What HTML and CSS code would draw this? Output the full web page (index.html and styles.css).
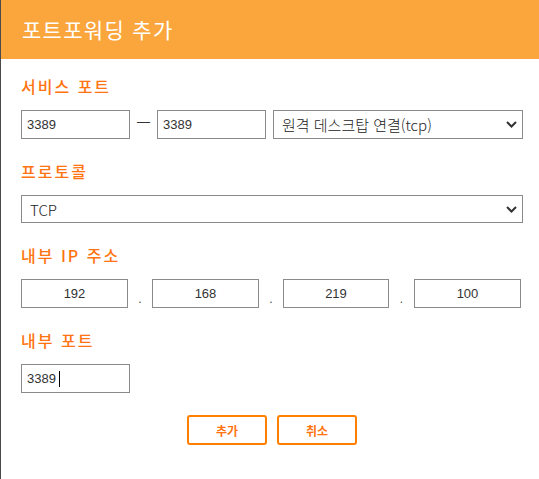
FILE: index.html
```html
<!DOCTYPE html>
<html lang="ko">
<head>
<meta charset="utf-8">
<link rel="stylesheet" href="styles.css">
</head>
<body>
<div class="dialog">
  <div class="header">포트포워딩 추가</div>
  <div class="content">
    <div class="section">
      <div class="label">서비스 포트</div>
      <div class="port-row">
        <input class="text-input port" type="text" value="3389">
        <span class="dash">—</span>
        <input class="text-input port" type="text" value="3389">
        <div class="select-wrap grow">
          <select class="select"><option>원격 데스크탑 연결(tcp)</option></select>
          <svg class="chev" width="11" height="7" viewBox="0 0 11 7"><path d="M1 1 L5.5 5.5 L10 1" fill="none" stroke="#333" stroke-width="2"/></svg>
        </div>
      </div>
    </div>
    <div class="section">
      <div class="label">프로토콜</div>
      <div class="select-wrap">
        <select class="select"><option>TCP</option></select>
        <svg class="chev" width="11" height="7" viewBox="0 0 11 7"><path d="M1 1 L5.5 5.5 L10 1" fill="none" stroke="#333" stroke-width="2"/></svg>
      </div>
    </div>
    <div class="section">
      <div class="label">내부 IP 주소</div>
      <div class="ip-row">
        <input class="text-input ip" type="text" value="192">
        <span class="dot">.</span>
        <input class="text-input ip" type="text" value="168">
        <span class="dot">.</span>
        <input class="text-input ip" type="text" value="219">
        <span class="dot">.</span>
        <input class="text-input ip" type="text" value="100">
      </div>
    </div>
    <div class="section">
      <div class="label">내부 포트</div>
      <div class="caret-wrap">
        <input class="text-input port" type="text" value="3389">
        <span class="caret"></span>
      </div>
    </div>
    <div class="buttons">
      <button class="btn">추가</button>
      <button class="btn">취소</button>
    </div>
  </div>
</div>
</body>
</html>
```
FILE: styles.css
```css
html, body {
  margin: 0;
  padding: 0;
  background: #ffffff;
}
body {
  font-family: "Noto Sans CJK KR", "Noto Sans", sans-serif;
  width: 539px;
  height: 479px;
  overflow: hidden;
}
.dialog {
  border-left: 1px solid #4a4a4a;
  height: 479px;
  box-sizing: border-box;
}
.header {
  height: 59px;
  background: #faa63d;
  color: #ffffff;
  font-size: 21px;
  letter-spacing: 1.3px;
  display: flex;
  align-items: center;
  padding-left: 21px;
  padding-bottom: 2px;
  box-sizing: border-box;
}
.content {
  padding: 17px 16px 0 20px;
}
.section {
  margin-bottom: 22px;
}
.label {
  color: #ff7411;
  font-size: 16px;
  line-height: 20px;
  letter-spacing: 2px;
  font-weight: 500;
  margin-bottom: 14px;
}
.text-input {
  box-sizing: border-box;
  height: 29px;
  border: 1px solid #8a8a8a;
  border-radius: 0;
  padding: 0 5px;
  font-family: "Liberation Sans", "Noto Sans CJK KR", sans-serif;
  font-size: 13px;
  color: #333;
  background: #fff;
  outline: none;
  margin: 0;
}
.port {
  width: 109px;
}
.port-row {
  display: flex;
  align-items: center;
}
.dash {
  width: 27px;
  text-align: center;
  font-family: "Liberation Sans", sans-serif;
  font-size: 13px;
  color: #333;
  margin-top: -6px;
}
.grow {
  flex: 1;
  margin-left: 7px;
}
.select-wrap {
  position: relative;
}
.select {
  appearance: none;
  -webkit-appearance: none;
  width: 100%;
  box-sizing: border-box;
  height: 28px;
  border: 1px solid #8a8a8a;
  border-radius: 0;
  background: #fff;
  padding: 0 8px;
  font-family: "Noto Sans CJK KR", "Noto Sans", sans-serif;
  font-weight: 300;
  font-size: 15px;
  color: #222;
  outline: none;
  margin: 0;
}
.port-row .select {
  height: 29px;
}
.chev {
  position: absolute;
  right: 6px;
  top: 11px;
  pointer-events: none;
}
.ip-row {
  display: grid;
  grid-template-columns: 107px 24px 107px 24px 106px 25px 107px;
  align-items: center;
}
.ip {
  width: 100%;
  text-align: center;
}
.dot {
  text-align: center;
  font-family: "Liberation Sans", sans-serif;
  font-size: 12px;
  color: #444;
  padding-top: 10px;
}
.caret-wrap {
  position: relative;
  width: 109px;
}
.caret {
  position: absolute;
  left: 38px;
  top: 7px;
  width: 1px;
  height: 16px;
  background: #000;
}
.buttons {
  display: flex;
  justify-content: center;
  gap: 10px;
  padding-top: 0;
}
.btn {
  width: 80px;
  height: 30px;
  border: 2px solid #ff8000;
  border-radius: 3px;
  background: #fff;
  color: #ff7411;
  font-family: "Noto Sans CJK KR", sans-serif;
  font-size: 12px;
  font-weight: 700;
  padding: 0;
  margin: 0;
}
```
